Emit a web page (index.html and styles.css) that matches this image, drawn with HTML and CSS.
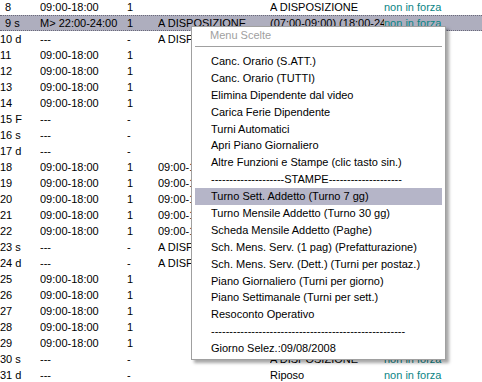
FILE: index.html
```html
<!DOCTYPE html>
<html>
<head>
<meta charset="utf-8">
<link rel="stylesheet" href="styles.css">
</head>
<body>
<div class="grid">
  <div class="row"><span class="c day one">8</span><span class="c time">09:00-18:00</span><span class="c n">1</span><span class="c d4"></span><span class="c d5">A DISPOSIZIONE</span><span class="c st">non in forza</span></div>
  <div class="row sel"><span class="c day one">9 s</span><span class="c time">M&gt; 22:00-24:00</span><span class="c n">1</span><span class="c d4">A DISPOSIZIONE</span><span class="c d5">(07:00-09:00) (18:00-24:00)</span><span class="c st">non in forza</span></div>
  <div class="row"><span class="c day">10 d</span><span class="c time">---</span><span class="c n">-</span><span class="c d4">A DISPOSIZIONE</span><span class="c d5"></span><span class="c st"></span></div>
  <div class="row"><span class="c day">11</span><span class="c time">09:00-18:00</span><span class="c n">1</span><span class="c d4"></span><span class="c d5"></span><span class="c st"></span></div>
  <div class="row"><span class="c day">12</span><span class="c time">09:00-18:00</span><span class="c n">1</span><span class="c d4"></span><span class="c d5"></span><span class="c st"></span></div>
  <div class="row"><span class="c day">13</span><span class="c time">09:00-18:00</span><span class="c n">1</span><span class="c d4"></span><span class="c d5"></span><span class="c st"></span></div>
  <div class="row"><span class="c day">14</span><span class="c time">09:00-18:00</span><span class="c n">1</span><span class="c d4"></span><span class="c d5"></span><span class="c st"></span></div>
  <div class="row"><span class="c day">15 F</span><span class="c time">---</span><span class="c n">-</span><span class="c d4"></span><span class="c d5"></span><span class="c st"></span></div>
  <div class="row"><span class="c day">16 s</span><span class="c time">---</span><span class="c n">-</span><span class="c d4"></span><span class="c d5"></span><span class="c st"></span></div>
  <div class="row"><span class="c day">17 d</span><span class="c time">---</span><span class="c n">-</span><span class="c d4"></span><span class="c d5"></span><span class="c st"></span></div>
  <div class="row"><span class="c day">18</span><span class="c time">09:00-18:00</span><span class="c n">1</span><span class="c d4">09:00-18:00</span><span class="c d5"></span><span class="c st"></span></div>
  <div class="row"><span class="c day">19</span><span class="c time">09:00-18:00</span><span class="c n">1</span><span class="c d4">09:00-18:00</span><span class="c d5"></span><span class="c st"></span></div>
  <div class="row"><span class="c day">20</span><span class="c time">09:00-18:00</span><span class="c n">1</span><span class="c d4">09:00-18:00</span><span class="c d5"></span><span class="c st"></span></div>
  <div class="row"><span class="c day">21</span><span class="c time">09:00-18:00</span><span class="c n">1</span><span class="c d4">09:00-18:00</span><span class="c d5"></span><span class="c st"></span></div>
  <div class="row"><span class="c day">22</span><span class="c time">09:00-18:00</span><span class="c n">1</span><span class="c d4">09:00-18:00</span><span class="c d5"></span><span class="c st"></span></div>
  <div class="row"><span class="c day">23 s</span><span class="c time">---</span><span class="c n">-</span><span class="c d4">A DISPOSIZIONE</span><span class="c d5"></span><span class="c st"></span></div>
  <div class="row"><span class="c day">24 d</span><span class="c time">---</span><span class="c n">-</span><span class="c d4">A DISPOSIZIONE</span><span class="c d5"></span><span class="c st"></span></div>
  <div class="row"><span class="c day">25</span><span class="c time">09:00-18:00</span><span class="c n">1</span><span class="c d4"></span><span class="c d5"></span><span class="c st"></span></div>
  <div class="row"><span class="c day">26</span><span class="c time">09:00-18:00</span><span class="c n">1</span><span class="c d4"></span><span class="c d5"></span><span class="c st"></span></div>
  <div class="row"><span class="c day">27</span><span class="c time">09:00-18:00</span><span class="c n">1</span><span class="c d4"></span><span class="c d5"></span><span class="c st"></span></div>
  <div class="row"><span class="c day">28</span><span class="c time">09:00-18:00</span><span class="c n">1</span><span class="c d4"></span><span class="c d5"></span><span class="c st"></span></div>
  <div class="row"><span class="c day">29</span><span class="c time">09:00-18:00</span><span class="c n">1</span><span class="c d4"></span><span class="c d5"></span><span class="c st"></span></div>
  <div class="row"><span class="c day">30 s</span><span class="c time">---</span><span class="c n">-</span><span class="c d4"></span><span class="c d5">A DISPOSIZIONE</span><span class="c st">non in forza</span></div>
  <div class="row"><span class="c day">31 d</span><span class="c time">---</span><span class="c n">-</span><span class="c d4"></span><span class="c d5">Riposo</span><span class="c st">non in forza</span></div>
</div>

<div class="menu">
  <div class="title">Menu Scelte</div>
  <div class="sep"></div>
  <div class="item">Canc. Orario (S.ATT.)</div>
  <div class="item">Canc. Orario (TUTTI)</div>
  <div class="item">Elimina Dipendente dal video</div>
  <div class="item">Carica Ferie Dipendente</div>
  <div class="item">Turni Automatici</div>
  <div class="item">Apri Piano Giornaliero</div>
  <div class="item">Altre Funzioni e Stampe (clic tasto sin.)</div>
  <div class="item">--------------------STAMPE--------------------</div>
  <div class="item hi">Turno Sett. Addetto (Turno 7 gg)</div>
  <div class="item">Turno Mensile Addetto (Turno 30 gg)</div>
  <div class="item">Scheda Mensile Addetto (Paghe)</div>
  <div class="item">Sch. Mens. Serv. (1 pag) (Prefatturazione)</div>
  <div class="item">Sch. Mens. Serv. (Dett.) (Turni per postaz.)</div>
  <div class="item">Piano Giornaliero (Turni per giorno)</div>
  <div class="item">Piano Settimanale (Turni per sett.)</div>
  <div class="item">Resoconto Operativo</div>
  <div class="item">-----------------------------------------------------</div>
  <div class="item">Giorno Selez.:09/08/2008</div>
</div>
</body>
</html>
```
FILE: styles.css
```css
html, body {
  margin: 0;
  padding: 0;
  background: #ffffff;
}
body {
  font-family: "Liberation Sans", Arial, sans-serif;
  font-size: 11px;
  color: #000;
  width: 482px;
  height: 382px;
  overflow: hidden;
  position: relative;
}
.grid {
  margin-top: -1px;
  display: flex;
  flex-direction: column;
}
.row {
  display: grid;
  grid-template-columns: 40px 87px 31px 112px 114px 1fr;
  height: 16px;
  line-height: 16px;
  box-sizing: border-box;
}
.row.sel {
  background: #aeaebe;
  border-top: 1px dotted #6a6a7a;
  border-bottom: 1px dotted #6a6a7a;
  line-height: 14px;
}
.c {
  white-space: nowrap;
  overflow: hidden;
}
.day.one {
  padding-left: 5px;
}
.st {
  color: #0a8585;
}
.menu {
  position: absolute;
  left: 191px;
  top: 26px;
  width: 253px;
  background: #ffffff;
  border: 1px solid #a0a0a0;
  box-shadow: 3px 3px 3px rgba(0, 0, 0, 0.35);
  padding: 0 3px 2px 3px;
  box-sizing: content-box;
  width: 247px;
}
.title {
  height: 17px;
  line-height: 17px;
  padding-left: 15px;
  color: #a0a0a0;
}
.sep {
  height: 1px;
  background: #a0a0a0;
  margin: 2px 0 5px 0;
  border-bottom: 1px solid #ffffff;
}
.item {
  height: 16.9px;
  line-height: 16.9px;
  padding-left: 16px;
  white-space: nowrap;
  overflow: hidden;
}
.item.hi {
  background: #b5b5c8;
}
```
